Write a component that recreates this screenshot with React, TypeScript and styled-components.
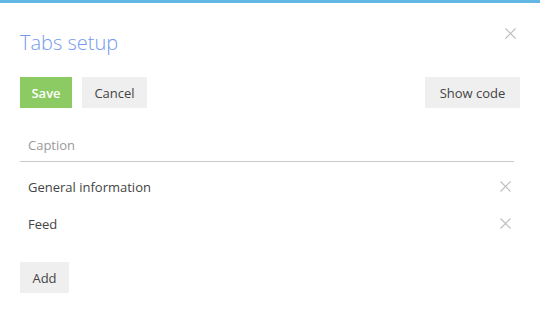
import React from "react";
import styled, { createGlobalStyle } from "styled-components";

const GlobalStyle = createGlobalStyle`
  html, body {
    margin: 0;
    padding: 0;
    background: #ffffff;
    font-family: "Open Sans", "Noto Sans", sans-serif;
  }
`;

const TopBar = styled.div`
  height: 3px;
  background-color: #62b7e4;
`;

const Dialog = styled.div`
  position: relative;
  padding: 0 20px;
  width: 540px;
  box-sizing: border-box;
`;

const Title = styled.h1`
  margin: 0;
  padding-top: 27px;
  font-size: 20px;
  font-weight: 300;
  line-height: 26px;
  color: #7499ee;
`;

const CloseButton = styled.button`
  position: absolute;
  top: 22px;
  right: 21px;
  width: 17px;
  height: 17px;
  padding: 0;
  border: none;
  background: transparent;
  display: flex;
  align-items: center;
  justify-content: center;
  cursor: pointer;
`;

const Toolbar = styled.div`
  display: flex;
  align-items: center;
  gap: 10px;
  margin-top: 21px;
`;

const Spacer = styled.div`
  flex: 1;
`;

const Button = styled.button<{ $primary?: boolean; $minWidth?: number }>`
  height: 31px;
  min-width: ${(p) => (p.$minWidth ? `${p.$minWidth}px` : "0")};
  padding: 0 10px;
  border: none;
  border-radius: 0;
  font-family: inherit;
  font-size: 13px;
  font-weight: ${(p) => (p.$primary ? 600 : 400)};
  background-color: ${(p) => (p.$primary ? "#8cca63" : "#efefef")};
  color: ${(p) => (p.$primary ? "#ffffff" : "#444444")};
  cursor: pointer;
`;

const Grid = styled.div`
  width: 494px;
  margin-top: 23px;
`;

const GridHeader = styled.div`
  height: 31px;
  box-sizing: border-box;
  display: flex;
  align-items: center;
  padding: 0 0 3px 8px;
  border-bottom: 1px solid #c9c9c9;
  font-size: 13px;
  color: #999999;
`;

const Row = styled.div`
  height: 37px;
  display: flex;
  align-items: center;
  justify-content: space-between;
  padding-left: 8px;
  padding-right: 2px;
  font-size: 13px;
  color: #444444;
  &:first-of-type {
    margin-top: 6px;
  }
`;

const RemoveButton = styled.button`
  width: 14px;
  height: 14px;
  padding: 0;
  border: none;
  background: transparent;
  display: flex;
  align-items: center;
  justify-content: center;
  cursor: pointer;
`;

const Footer = styled.div`
  margin-top: 20px;
`;

function Cross({ size }: { size: number }) {
  return (
    <svg width={size} height={size} viewBox={`0 0 ${size} ${size}`}>
      <path
        d={`M0.5 0.5 L${size - 0.5} ${size - 0.5} M${size - 0.5} 0.5 L0.5 ${size - 0.5}`}
        stroke="#bdbdbd"
        strokeWidth="1.1"
        fill="none"
      />
    </svg>
  );
}

const tabs = ["General information", "Feed"];

export default function App() {
  return (
    <>
      <GlobalStyle />
      <TopBar />
      <Dialog>
        <Title>Tabs setup</Title>
        <CloseButton aria-label="Close">
          <Cross size={11} />
        </CloseButton>
        <Toolbar>
          <Button $primary $minWidth={52}>Save</Button>
          <Button $minWidth={65}>Cancel</Button>
          <Spacer />
          <Button $minWidth={95}>Show code</Button>
        </Toolbar>
        <Grid>
          <GridHeader>Caption</GridHeader>
          <div>
            {tabs.map((t) => (
              <Row key={t}>
                <span>{t}</span>
                <RemoveButton aria-label="Remove">
                  <Cross size={11} />
                </RemoveButton>
              </Row>
            ))}
          </div>
        </Grid>
        <Footer>
          <Button $minWidth={49}>Add</Button>
        </Footer>
      </Dialog>
    </>
  );
}
